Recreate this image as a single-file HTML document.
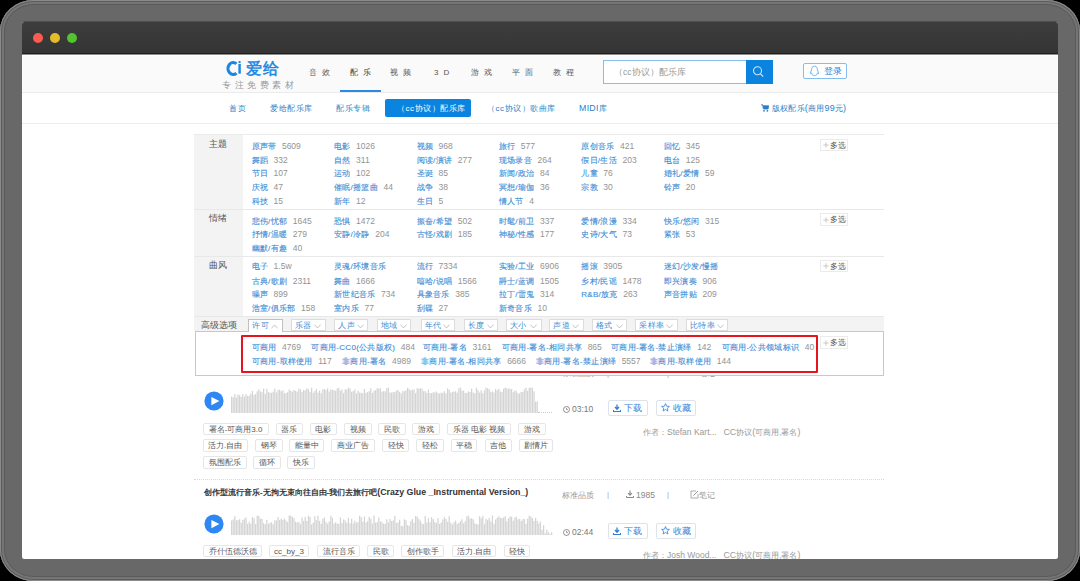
<!DOCTYPE html>
<html><head><meta charset="utf-8">
<style>
*{margin:0;padding:0;box-sizing:border-box}
html,body{width:1080px;height:581px;overflow:hidden;background:#000}
body{font-family:"Liberation Sans",sans-serif;position:relative}
.a{position:absolute;white-space:nowrap}
#bezel{position:absolute;left:0;top:0;width:1080px;height:581px;border-radius:34px / 31px;background:#686868;overflow:hidden;box-shadow:inset 0 0 0 1px #8a8a8a,inset 0 0 0 2px #5c5c5c,inset 0 0 0 4px #757575,inset 0 0 0 5px #5a5a5a}
#win{position:absolute;left:22px;top:22px;width:1036px;height:537px;border-radius:2.5px;overflow:hidden;background:#fff}
#ring{position:absolute;left:22px;top:20.5px;width:1036px;height:20px;border-radius:3px;background:#505050}
#tb{position:absolute;left:0;top:0;width:1036px;height:32.4px;background:linear-gradient(#3d3d3d,#353535 90%);border-bottom:1px solid #1f1f1f}
.dot{position:absolute;top:10.8px;width:10.5px;height:10.5px;border-radius:50%}
#page{position:absolute;left:-22px;top:-22px;width:1080px;height:581px}
#hdr{position:absolute;left:22px;top:55px;width:1036px;height:38px;background:#fafafa;border-top:1px solid #fff;border-bottom:1px solid #ebebeb}
#nav{position:absolute;left:22px;top:93px;width:1036px;height:31px;background:#fff;border-bottom:1px solid #eee}
.hn{font-size:8px;color:#555;letter-spacing:4.6px;line-height:11px}
.nv{font-size:8px;color:#2a7fc6;line-height:11px;letter-spacing:0.5px}
.lk{font-size:8px;color:#3d8dd6;line-height:11px;letter-spacing:0.3px;-webkit-text-stroke:0.12px #3d8dd6}
.nm{-webkit-text-stroke:0}
.nm{color:#939393;margin-left:5.5px;font-size:8.5px;letter-spacing:0}
.lb{font-size:8.5px;color:#555;line-height:11px}
.dd{position:absolute;top:319px;height:12px;border:1px solid #dcdcdc;background:#fff;font-size:8px;color:#3a8ad2;line-height:12px;padding-left:3px;letter-spacing:0.3px}
.dd svg{position:absolute;right:3.5px;top:3.5px}
.more{position:absolute;width:28px;height:12.5px;border:1px solid #ebebeb;background:#fff;font-size:8.3px;color:#555;line-height:11px}
.tag{position:absolute;height:12.5px;border:1px solid #e6e6e6;border-radius:2px;background:#fff;font-size:8px;color:#555;line-height:11.8px;text-align:center}
.btn{position:absolute;height:16.2px;border:1px solid #dde3ea;border-radius:2px;background:#fff;font-size:8.5px;color:#2f7fd8;line-height:13.6px}
.gray{font-size:8px;color:#999;line-height:11px}
</style></head><body>
<div id="bezel">
 <div id="ring"></div>
 <div id="win">
  <div id="tb">
   <div class="dot" style="left:10.8px;background:#fc5b52"></div>
   <div class="dot" style="left:27.8px;background:#e6bb2a"></div>
   <div class="dot" style="left:44.8px;background:#52c42f"></div>
  </div>
  <div id="page">
   <div id="hdr"></div>
   <div class="a" style="left:22px;top:54px;width:1036px;height:1px;background:#8a8a8a"></div>
   <svg class="a" style="left:225px;top:60px" width="18" height="17" viewBox="0 0 18 17"><path d="M11.4 3.9 A5.1 6 0 1 0 11.4 13.1" fill="none" stroke="#1a87e0" stroke-width="3.2"/><rect x="13.4" y="1" width="2.4" height="2.1" rx="1" fill="#1a87e0"/><rect x="13.4" y="3.9" width="2.4" height="9.8" fill="#1a87e0"/></svg>
   <div class="a" style="left:245.5px;top:59px;font-size:16px;color:#1a87e0;line-height:19px;-webkit-text-stroke:0.5px #1a87e0;letter-spacing:1px">爱给</div>
   <div class="a" style="left:222px;top:80px;font-size:9px;color:#9a9a9a;line-height:11px;letter-spacing:3.5px">专注免费素材</div>
   <div class="a hn" style="left:309px;top:67px">音效</div>
   <div class="a hn" style="left:350px;top:67px;color:#333">配乐</div>
   <div class="a hn" style="left:390px;top:67px">视频</div>
   <div class="a hn" style="left:434px;top:67px;letter-spacing:5px">3D</div>
   <div class="a hn" style="left:471px;top:67px">游戏</div>
   <div class="a hn" style="left:512px;top:67px">平面</div>
   <div class="a hn" style="left:553px;top:67px">教程</div>
   <div class="a" style="left:340px;top:90px;width:41px;height:2px;background:#2a8ae2"></div>
   <div class="a" style="left:603px;top:60px;width:144px;height:24px;border:1px solid #86bdec;background:#fff"></div>
   <div class="a" style="left:614px;top:66px;font-size:8.5px;color:#999;line-height:12px">（cc协议）配乐库</div>
   <div class="a" style="left:746px;top:60px;width:27px;height:24px;background:#0a84df"></div>
   <svg class="a" style="left:752.3px;top:66.3px" width="13" height="12" viewBox="0 0 13 12"><circle cx="5.5" cy="4.8" r="4" fill="none" stroke="#cfe6fa" stroke-width="1.05"/><path d="M8.3 7.7 L11.2 10.6" stroke="#cfe6fa" stroke-width="1.2"/></svg>
   <div class="a" style="left:803px;top:63px;width:44px;height:16px;border:1px solid #85bdec;border-radius:2px;background:#fff"></div>
   <svg class="a" style="left:809px;top:65px" width="11" height="12" viewBox="0 0 11 12"><path d="M5.5 1.2 C3.3 1.2 2.6 3 2.6 4.6 C2.6 5.5 1.6 6.6 1.5 8 C1.5 9 2.2 8.6 2.6 8.2 C2.8 9.4 3.6 10.6 5.5 10.6 C7.4 10.6 8.2 9.4 8.4 8.2 C8.8 8.6 9.5 9 9.5 8 C9.4 6.6 8.4 5.5 8.4 4.6 C8.4 3 7.7 1.2 5.5 1.2 Z" fill="none" stroke="#5aaae8" stroke-width="0.9"/></svg>
   <div class="a" style="left:824px;top:65px;font-size:9px;color:#2a82d2;line-height:12px">登录</div>
   <div id="nav"></div>
   <div class="a nv" style="left:229px;top:103px">首页</div>
   <div class="a nv" style="left:270px;top:103px">爱给配乐库</div>
   <div class="a nv" style="left:336px;top:103px">配乐专辑</div>
   <div class="a" style="left:385px;top:99px;width:86px;height:18px;background:#0a84df;border-radius:2px"></div>
   <div class="a nv" style="left:397px;top:103px;color:#fff">（cc协议）配乐库</div>
   <div class="a nv" style="left:487px;top:103px">（cc协议）歌曲库</div>
   <div class="a nv" style="left:579px;top:103px"><span style="font-size:8.8px;letter-spacing:0.3px">MIDI</span>库</div>
   <svg class="a" style="left:761px;top:104px" width="8" height="8" viewBox="0 0 8 8"><path d="M0 0.8 H1.6 L2.4 5 H7 L7.8 1.8 H2" fill="#2a7fc6" stroke="#2a7fc6" stroke-width="0.8"/><circle cx="3" cy="6.8" r="0.9" fill="#2a7fc6"/><circle cx="6.4" cy="6.8" r="0.9" fill="#2a7fc6"/></svg>
   <div class="a nv" style="left:772px;top:102.8px;font-size:8.4px;letter-spacing:0.2px">版权配乐<span style="font-size:9px">(</span>商用<span style="font-size:9px">99</span>元<span style="font-size:9px">)</span></div>
   <div class="a" style="left:194px;top:134px;width:690px;height:1px;background:#ebebeb"></div>
   <div class="a" style="left:194px;top:135px;width:48.5px;height:181px;background:#f3f3f3"></div>
   <div class="a" style="left:194px;top:209px;width:690px;height:1px;background:#e8e8e8"></div>
   <div class="a" style="left:194px;top:256px;width:690px;height:1px;background:#e8e8e8"></div>
   <div class="a" style="left:194px;top:316px;width:690px;height:1px;background:#e8e8e8"></div>
   <div class="a" style="left:194px;top:317px;width:690px;height:14px;background:#f3f3f3"></div>
   <div class="a lb" style="left:209px;top:139px">主题</div>
   <div class="a lk" style="left:251.5px;top:140.85px">原声带<span class="nm">5609</span></div>
   <div class="a lk" style="left:334.0px;top:140.85px">电影<span class="nm">1026</span></div>
   <div class="a lk" style="left:416.5px;top:140.85px">视频<span class="nm">968</span></div>
   <div class="a lk" style="left:498.75px;top:140.85px">旅行<span class="nm">577</span></div>
   <div class="a lk" style="left:581.25px;top:140.85px">原创音乐<span class="nm">421</span></div>
   <div class="a lk" style="left:663.75px;top:140.85px">回忆<span class="nm">345</span></div>
   <div class="a lk" style="left:251.5px;top:154.6px">舞蹈<span class="nm">332</span></div>
   <div class="a lk" style="left:334.0px;top:154.6px">自然<span class="nm">311</span></div>
   <div class="a lk" style="left:416.5px;top:154.6px">阅读/演讲<span class="nm">277</span></div>
   <div class="a lk" style="left:498.75px;top:154.6px">现场录音<span class="nm">264</span></div>
   <div class="a lk" style="left:581.25px;top:154.6px">假日/生活<span class="nm">203</span></div>
   <div class="a lk" style="left:663.75px;top:154.6px">电台<span class="nm">125</span></div>
   <div class="a lk" style="left:251.5px;top:168.35px">节日<span class="nm">107</span></div>
   <div class="a lk" style="left:334.0px;top:168.35px">运动<span class="nm">102</span></div>
   <div class="a lk" style="left:416.5px;top:168.35px">圣诞<span class="nm">85</span></div>
   <div class="a lk" style="left:498.75px;top:168.35px">新闻/政治<span class="nm">84</span></div>
   <div class="a lk" style="left:581.25px;top:168.35px">儿童<span class="nm">76</span></div>
   <div class="a lk" style="left:663.75px;top:168.35px">婚礼/爱情<span class="nm">59</span></div>
   <div class="a lk" style="left:251.5px;top:182.1px">庆祝<span class="nm">47</span></div>
   <div class="a lk" style="left:334.0px;top:182.1px">催眠/摇篮曲<span class="nm">44</span></div>
   <div class="a lk" style="left:416.5px;top:182.1px">战争<span class="nm">38</span></div>
   <div class="a lk" style="left:498.75px;top:182.1px">冥想/瑜伽<span class="nm">36</span></div>
   <div class="a lk" style="left:581.25px;top:182.1px">宗教<span class="nm">30</span></div>
   <div class="a lk" style="left:663.75px;top:182.1px">铃声<span class="nm">20</span></div>
   <div class="a lk" style="left:251.5px;top:195.85px">科技<span class="nm">15</span></div>
   <div class="a lk" style="left:334.0px;top:195.85px">新年<span class="nm">12</span></div>
   <div class="a lk" style="left:416.5px;top:195.85px">生日<span class="nm">5</span></div>
   <div class="a lk" style="left:498.75px;top:195.85px">情人节<span class="nm">4</span></div>
   <div class="more" style="left:819.8px;top:138.5px"><svg style="position:absolute;left:2px;top:2.5px" width="6" height="6" viewBox="0 0 6 6"><path d="M3 0.3 V5.7 M0.3 3 H5.7" stroke="#b5b5b5" stroke-width="0.7"/></svg><span style="position:absolute;left:9.5px;top:0">多选</span></div>
   <div class="a lb" style="left:209px;top:213px">情绪</div>
   <div class="a lk" style="left:251.5px;top:215.6px">悲伤/忧郁<span class="nm">1645</span></div>
   <div class="a lk" style="left:334.0px;top:215.6px">恐惧<span class="nm">1472</span></div>
   <div class="a lk" style="left:416.5px;top:215.6px">振奋/希望<span class="nm">502</span></div>
   <div class="a lk" style="left:498.75px;top:215.6px">时髦/前卫<span class="nm">337</span></div>
   <div class="a lk" style="left:581.25px;top:215.6px">爱情/浪漫<span class="nm">334</span></div>
   <div class="a lk" style="left:663.75px;top:215.6px">快乐/悠闲<span class="nm">315</span></div>
   <div class="a lk" style="left:251.5px;top:229.1px">抒情/温暖<span class="nm">279</span></div>
   <div class="a lk" style="left:334.0px;top:229.1px">安静/冷静<span class="nm">204</span></div>
   <div class="a lk" style="left:416.5px;top:229.1px">古怪/戏剧<span class="nm">185</span></div>
   <div class="a lk" style="left:498.75px;top:229.1px">神秘/性感<span class="nm">177</span></div>
   <div class="a lk" style="left:581.25px;top:229.1px">史诗/大气<span class="nm">73</span></div>
   <div class="a lk" style="left:663.75px;top:229.1px">紧张<span class="nm">53</span></div>
   <div class="a lk" style="left:251.5px;top:243.1px">幽默/有趣<span class="nm">40</span></div>
   <div class="more" style="left:819.8px;top:213px"><svg style="position:absolute;left:2px;top:2.5px" width="6" height="6" viewBox="0 0 6 6"><path d="M3 0.3 V5.7 M0.3 3 H5.7" stroke="#b5b5b5" stroke-width="0.7"/></svg><span style="position:absolute;left:9.5px;top:0">多选</span></div>
   <div class="a lb" style="left:209px;top:259.5px">曲风</div>
   <div class="a lk" style="left:251.5px;top:261.35px">电子<span class="nm">1.5w</span></div>
   <div class="a lk" style="left:334.0px;top:261.35px">灵魂/环境音乐</div>
   <div class="a lk" style="left:416.5px;top:261.35px">流行<span class="nm">7334</span></div>
   <div class="a lk" style="left:498.75px;top:261.35px">实验/工业<span class="nm">6906</span></div>
   <div class="a lk" style="left:581.25px;top:261.35px">摇滚<span class="nm">3905</span></div>
   <div class="a lk" style="left:663.75px;top:261.35px">迷幻/沙发/慢摇</div>
   <div class="a lk" style="left:251.5px;top:275.6px">古典/歌剧<span class="nm">2311</span></div>
   <div class="a lk" style="left:334.0px;top:275.6px">舞曲<span class="nm">1666</span></div>
   <div class="a lk" style="left:416.5px;top:275.6px">嘻哈/说唱<span class="nm">1566</span></div>
   <div class="a lk" style="left:498.75px;top:275.6px">爵士/蓝调<span class="nm">1505</span></div>
   <div class="a lk" style="left:581.25px;top:275.6px">乡村/民谣<span class="nm">1478</span></div>
   <div class="a lk" style="left:663.75px;top:275.6px">即兴演奏<span class="nm">906</span></div>
   <div class="a lk" style="left:251.5px;top:289.35px">噪声<span class="nm">899</span></div>
   <div class="a lk" style="left:334.0px;top:289.35px">新世纪音乐<span class="nm">734</span></div>
   <div class="a lk" style="left:416.5px;top:289.35px">具象音乐<span class="nm">385</span></div>
   <div class="a lk" style="left:498.75px;top:289.35px">拉丁/雷鬼<span class="nm">314</span></div>
   <div class="a lk" style="left:581.25px;top:289.35px">R&amp;B/放克<span class="nm">263</span></div>
   <div class="a lk" style="left:663.75px;top:289.35px">声音拼贴<span class="nm">209</span></div>
   <div class="a lk" style="left:251.5px;top:303.1px">浩室/俱乐部<span class="nm">158</span></div>
   <div class="a lk" style="left:334.0px;top:303.1px">室内乐<span class="nm">77</span></div>
   <div class="a lk" style="left:416.5px;top:303.1px">刮碟<span class="nm">27</span></div>
   <div class="a lk" style="left:498.75px;top:303.1px">新奇音乐<span class="nm">10</span></div>
   <div class="more" style="left:819.8px;top:259.5px"><svg style="position:absolute;left:2px;top:2.5px" width="6" height="6" viewBox="0 0 6 6"><path d="M3 0.3 V5.7 M0.3 3 H5.7" stroke="#b5b5b5" stroke-width="0.7"/></svg><span style="position:absolute;left:9.5px;top:0">多选</span></div>
   <div class="a gray" style="left:562px;top:367.5px">标准品质</div>
   <div class="a gray" style="left:607px;top:367.5px;color:#aaa">|</div>
   <div class="a gray" style="left:626px;top:367.5px">⬇ 1376</div>
   <div class="a gray" style="left:667px;top:367.5px;color:#aaa">|</div>
   <div class="a gray" style="left:690px;top:367.5px">✎ 笔记</div>
   <div class="a lb" style="left:200.5px;top:320px">高级选项</div>
   <div class="dd" style="left:291px;width:34.5px">乐器<svg width="7" height="5" viewBox="0 0 7 5"><path d="M0.4 0.6 L3.5 4 L6.6 0.6" fill="none" stroke="#aaa" stroke-width="0.7"/></svg></div>
   <div class="dd" style="left:334.4px;width:33.9px">人声<svg width="7" height="5" viewBox="0 0 7 5"><path d="M0.4 0.6 L3.5 4 L6.6 0.6" fill="none" stroke="#aaa" stroke-width="0.7"/></svg></div>
   <div class="dd" style="left:377.2px;width:34.2px">地域<svg width="7" height="5" viewBox="0 0 7 5"><path d="M0.4 0.6 L3.5 4 L6.6 0.6" fill="none" stroke="#aaa" stroke-width="0.7"/></svg></div>
   <div class="dd" style="left:420.5px;width:34.2px">年代<svg width="7" height="5" viewBox="0 0 7 5"><path d="M0.4 0.6 L3.5 4 L6.6 0.6" fill="none" stroke="#aaa" stroke-width="0.7"/></svg></div>
   <div class="dd" style="left:463.5px;width:34.6px">长度<svg width="7" height="5" viewBox="0 0 7 5"><path d="M0.4 0.6 L3.5 4 L6.6 0.6" fill="none" stroke="#aaa" stroke-width="0.7"/></svg></div>
   <div class="dd" style="left:506.1px;width:35.6px">大小<svg width="7" height="5" viewBox="0 0 7 5"><path d="M0.4 0.6 L3.5 4 L6.6 0.6" fill="none" stroke="#aaa" stroke-width="0.7"/></svg></div>
   <div class="dd" style="left:549.4px;width:34.3px">声道<svg width="7" height="5" viewBox="0 0 7 5"><path d="M0.4 0.6 L3.5 4 L6.6 0.6" fill="none" stroke="#aaa" stroke-width="0.7"/></svg></div>
   <div class="dd" style="left:592.2px;width:35.0px">格式<svg width="7" height="5" viewBox="0 0 7 5"><path d="M0.4 0.6 L3.5 4 L6.6 0.6" fill="none" stroke="#aaa" stroke-width="0.7"/></svg></div>
   <div class="dd" style="left:635.3px;width:42.5px">采样率<svg width="7" height="5" viewBox="0 0 7 5"><path d="M0.4 0.6 L3.5 4 L6.6 0.6" fill="none" stroke="#aaa" stroke-width="0.7"/></svg></div>
   <div class="dd" style="left:686.1px;width:42.2px">比特率<svg width="7" height="5" viewBox="0 0 7 5"><path d="M0.4 0.6 L3.5 4 L6.6 0.6" fill="none" stroke="#aaa" stroke-width="0.7"/></svg></div>
   <div class="a" style="left:194.5px;top:331px;width:689.5px;height:44.5px;border:1px solid #c8c8c8;background:#fff"></div>
   <div class="dd" style="left:248.3px;width:34.5px;height:13px;border-color:#c0c0c0;border-bottom:none">许可<svg width="7" height="5" viewBox="0 0 7 5"><path d="M0.4 4.4 L3.5 1 L6.6 4.4" fill="none" stroke="#aaa" stroke-width="0.7"/></svg></div>
   <div class="more" style="left:819.8px;top:336px"><svg style="position:absolute;left:2px;top:2.5px" width="6" height="6" viewBox="0 0 6 6"><path d="M3 0.3 V5.7 M0.3 3 H5.7" stroke="#b5b5b5" stroke-width="0.7"/></svg><span style="position:absolute;left:9.5px;top:0">多选</span></div>
   <div class="a" style="left:241px;top:334.5px;width:577px;height:38px;border:2.5px solid #e8141c;border-radius:1px"></div>
   <div class="a lk" style="left:251.7px;top:341.5px">可商用<span class="nm">4769</span></div>
   <div class="a lk" style="left:311.4px;top:341.5px">可商用-CC0(公共版权)<span class="nm">484</span></div>
   <div class="a lk" style="left:422.5px;top:341.5px">可商用-署名<span class="nm">3161</span></div>
   <div class="a lk" style="left:501.5px;top:341.5px">可商用-署名-相同共享<span class="nm">865</span></div>
   <div class="a lk" style="left:611px;top:341.5px">可商用-署名-禁止演绎<span class="nm">142</span></div>
   <div class="a lk" style="left:721.6px;top:341.5px">可商用-公共领域标识<span class="nm">40</span></div>
   <div class="a lk" style="left:251.7px;top:355.7px">可商用-取样使用<span class="nm">117</span></div>
   <div class="a lk" style="left:342px;top:355.7px">非商用-署名<span class="nm">4989</span></div>
   <div class="a lk" style="left:421px;top:355.7px">非商用-署名-相同共享<span class="nm">6666</span></div>
   <div class="a lk" style="left:535.5px;top:355.7px">非商用-署名-禁止演绎<span class="nm">5557</span></div>
   <div class="a lk" style="left:650.2px;top:355.7px">非商用-取样使用<span class="nm">144</span></div>
   <svg class="a" style="left:204px;top:390.8px" width="20" height="20" viewBox="0 0 20 20"><circle cx="10" cy="10" r="9.6" fill="#2f87f3"/><path d="M7.4 5.9 L15.4 10 L7.4 14.2 Z" fill="#fff"/></svg>
   <svg class="a" style="left:231px;top:382.7px" width="327" height="30" fill="#d4d4d4"><rect x="0.00" y="13.56" width="1.25" height="16.44"/><rect x="1.60" y="14.39" width="1.25" height="15.61"/><rect x="3.20" y="11.18" width="1.25" height="18.82"/><rect x="4.80" y="14.45" width="1.25" height="15.55"/><rect x="6.40" y="11.46" width="1.25" height="18.54"/><rect x="8.00" y="12.28" width="1.25" height="17.72"/><rect x="9.60" y="13.92" width="1.25" height="16.08"/><rect x="11.20" y="11.02" width="1.25" height="18.98"/><rect x="12.80" y="13.63" width="1.25" height="16.37"/><rect x="14.40" y="11.05" width="1.25" height="18.95"/><rect x="16.00" y="13.03" width="1.25" height="16.97"/><rect x="17.60" y="12.70" width="1.25" height="17.30"/><rect x="19.20" y="10.49" width="1.25" height="19.51"/><rect x="20.80" y="7.87" width="1.25" height="22.13"/><rect x="22.40" y="11.89" width="1.25" height="18.11"/><rect x="24.00" y="11.08" width="1.25" height="18.92"/><rect x="25.60" y="8.45" width="1.25" height="21.55"/><rect x="27.20" y="6.33" width="1.25" height="23.67"/><rect x="28.80" y="8.35" width="1.25" height="21.65"/><rect x="30.40" y="9.22" width="1.25" height="20.78"/><rect x="32.00" y="5.54" width="1.25" height="24.46"/><rect x="33.60" y="10.91" width="1.25" height="19.09"/><rect x="35.20" y="5.84" width="1.25" height="24.16"/><rect x="36.80" y="9.04" width="1.25" height="20.96"/><rect x="38.40" y="9.71" width="1.25" height="20.29"/><rect x="40.00" y="9.79" width="1.25" height="20.21"/><rect x="41.60" y="8.65" width="1.25" height="21.35"/><rect x="43.20" y="5.60" width="1.25" height="24.40"/><rect x="44.80" y="9.42" width="1.25" height="20.58"/><rect x="46.40" y="7.01" width="1.25" height="22.99"/><rect x="48.00" y="6.67" width="1.25" height="23.33"/><rect x="49.60" y="8.27" width="1.25" height="21.73"/><rect x="51.20" y="7.21" width="1.25" height="22.79"/><rect x="52.80" y="10.12" width="1.25" height="19.88"/><rect x="54.40" y="10.14" width="1.25" height="19.86"/><rect x="56.00" y="9.26" width="1.25" height="20.74"/><rect x="57.60" y="6.42" width="1.25" height="23.58"/><rect x="59.20" y="7.93" width="1.25" height="22.07"/><rect x="60.80" y="8.62" width="1.25" height="21.38"/><rect x="62.40" y="6.99" width="1.25" height="23.01"/><rect x="64.00" y="7.78" width="1.25" height="22.22"/><rect x="65.60" y="8.70" width="1.25" height="21.30"/><rect x="67.20" y="5.73" width="1.25" height="24.27"/><rect x="68.80" y="6.31" width="1.25" height="23.69"/><rect x="70.40" y="9.04" width="1.25" height="20.96"/><rect x="72.00" y="7.05" width="1.25" height="22.95"/><rect x="73.60" y="7.35" width="1.25" height="22.65"/><rect x="75.20" y="5.25" width="1.25" height="24.75"/><rect x="76.80" y="6.12" width="1.25" height="23.88"/><rect x="78.40" y="8.77" width="1.25" height="21.23"/><rect x="80.00" y="4.62" width="1.25" height="25.38"/><rect x="81.60" y="9.79" width="1.25" height="20.21"/><rect x="83.20" y="7.99" width="1.25" height="22.01"/><rect x="84.80" y="5.96" width="1.25" height="24.04"/><rect x="86.40" y="9.59" width="1.25" height="20.41"/><rect x="88.00" y="7.57" width="1.25" height="22.43"/><rect x="89.60" y="10.26" width="1.25" height="19.74"/><rect x="91.20" y="6.49" width="1.25" height="23.51"/><rect x="92.80" y="5.91" width="1.25" height="24.09"/><rect x="94.40" y="7.06" width="1.25" height="22.94"/><rect x="96.00" y="5.25" width="1.25" height="24.75"/><rect x="97.60" y="8.62" width="1.25" height="21.38"/><rect x="99.20" y="6.33" width="1.25" height="23.67"/><rect x="100.80" y="6.93" width="1.25" height="23.07"/><rect x="102.40" y="7.02" width="1.25" height="22.98"/><rect x="104.00" y="7.76" width="1.25" height="22.24"/><rect x="105.60" y="5.46" width="1.25" height="24.54"/><rect x="107.20" y="4.83" width="1.25" height="25.17"/><rect x="108.80" y="7.66" width="1.25" height="22.34"/><rect x="110.40" y="6.52" width="1.25" height="23.48"/><rect x="112.00" y="10.14" width="1.25" height="19.86"/><rect x="113.60" y="6.29" width="1.25" height="23.71"/><rect x="115.20" y="6.62" width="1.25" height="23.38"/><rect x="116.80" y="4.54" width="1.25" height="25.46"/><rect x="118.40" y="5.57" width="1.25" height="24.43"/><rect x="120.00" y="8.79" width="1.25" height="21.21"/><rect x="121.60" y="8.19" width="1.25" height="21.81"/><rect x="123.20" y="6.49" width="1.25" height="23.51"/><rect x="124.80" y="10.36" width="1.25" height="19.64"/><rect x="126.40" y="7.73" width="1.25" height="22.27"/><rect x="128.00" y="9.49" width="1.25" height="20.51"/><rect x="129.60" y="9.80" width="1.25" height="20.20"/><rect x="131.20" y="10.15" width="1.25" height="19.85"/><rect x="132.80" y="5.89" width="1.25" height="24.11"/><rect x="134.40" y="9.72" width="1.25" height="20.28"/><rect x="136.00" y="9.01" width="1.25" height="20.99"/><rect x="137.60" y="8.15" width="1.25" height="21.85"/><rect x="139.20" y="5.27" width="1.25" height="24.73"/><rect x="140.80" y="10.02" width="1.25" height="19.98"/><rect x="142.40" y="7.80" width="1.25" height="22.20"/><rect x="144.00" y="7.20" width="1.25" height="22.80"/><rect x="145.60" y="5.20" width="1.25" height="24.80"/><rect x="147.20" y="5.58" width="1.25" height="24.42"/><rect x="148.80" y="5.32" width="1.25" height="24.68"/><rect x="150.40" y="8.83" width="1.25" height="21.17"/><rect x="152.00" y="8.01" width="1.25" height="21.99"/><rect x="153.60" y="8.35" width="1.25" height="21.65"/><rect x="155.20" y="5.19" width="1.25" height="24.81"/><rect x="156.80" y="4.75" width="1.25" height="25.25"/><rect x="158.40" y="9.59" width="1.25" height="20.41"/><rect x="160.00" y="9.44" width="1.25" height="20.56"/><rect x="161.60" y="9.11" width="1.25" height="20.89"/><rect x="163.20" y="9.10" width="1.25" height="20.90"/><rect x="164.80" y="7.59" width="1.25" height="22.41"/><rect x="166.40" y="6.97" width="1.25" height="23.03"/><rect x="168.00" y="8.92" width="1.25" height="21.08"/><rect x="169.60" y="10.48" width="1.25" height="19.52"/><rect x="171.20" y="7.99" width="1.25" height="22.01"/><rect x="172.80" y="8.28" width="1.25" height="21.72"/><rect x="174.40" y="7.10" width="1.25" height="22.90"/><rect x="176.00" y="4.78" width="1.25" height="25.22"/><rect x="177.60" y="6.36" width="1.25" height="23.64"/><rect x="179.20" y="7.41" width="1.25" height="22.59"/><rect x="180.80" y="6.79" width="1.25" height="23.21"/><rect x="182.40" y="6.44" width="1.25" height="23.56"/><rect x="184.00" y="10.18" width="1.25" height="19.82"/><rect x="185.60" y="5.10" width="1.25" height="24.90"/><rect x="187.20" y="5.82" width="1.25" height="24.18"/><rect x="188.80" y="5.25" width="1.25" height="24.75"/><rect x="190.40" y="5.71" width="1.25" height="24.29"/><rect x="192.00" y="8.15" width="1.25" height="21.85"/><rect x="193.60" y="8.11" width="1.25" height="21.89"/><rect x="195.20" y="9.88" width="1.25" height="20.12"/><rect x="196.80" y="6.69" width="1.25" height="23.31"/><rect x="198.40" y="10.13" width="1.25" height="19.87"/><rect x="200.00" y="10.10" width="1.25" height="19.90"/><rect x="201.60" y="9.25" width="1.25" height="20.75"/><rect x="203.20" y="9.53" width="1.25" height="20.47"/><rect x="204.80" y="8.46" width="1.25" height="21.54"/><rect x="206.40" y="10.18" width="1.25" height="19.82"/><rect x="208.00" y="10.50" width="1.25" height="19.50"/><rect x="209.60" y="9.59" width="1.25" height="20.41"/><rect x="211.20" y="9.89" width="1.25" height="20.11"/><rect x="212.80" y="8.32" width="1.25" height="21.68"/><rect x="214.40" y="10.35" width="1.25" height="19.65"/><rect x="216.00" y="5.25" width="1.25" height="24.75"/><rect x="217.60" y="6.82" width="1.25" height="23.18"/><rect x="219.20" y="9.61" width="1.25" height="20.39"/><rect x="220.80" y="8.99" width="1.25" height="21.01"/><rect x="222.40" y="8.42" width="1.25" height="21.58"/><rect x="224.00" y="8.32" width="1.25" height="21.68"/><rect x="225.60" y="9.76" width="1.25" height="20.24"/><rect x="227.20" y="5.41" width="1.25" height="24.59"/><rect x="228.80" y="4.54" width="1.25" height="25.46"/><rect x="230.40" y="7.70" width="1.25" height="22.30"/><rect x="232.00" y="7.60" width="1.25" height="22.40"/><rect x="233.60" y="9.98" width="1.25" height="20.02"/><rect x="235.20" y="9.89" width="1.25" height="20.11"/><rect x="236.80" y="8.44" width="1.25" height="21.56"/><rect x="238.40" y="8.91" width="1.25" height="21.09"/><rect x="240.00" y="5.53" width="1.25" height="24.47"/><rect x="241.60" y="9.53" width="1.25" height="20.47"/><rect x="243.20" y="10.36" width="1.25" height="19.64"/><rect x="244.80" y="4.79" width="1.25" height="25.21"/><rect x="246.40" y="7.33" width="1.25" height="22.67"/><rect x="248.00" y="9.62" width="1.25" height="20.38"/><rect x="249.60" y="7.24" width="1.25" height="22.76"/><rect x="251.20" y="10.34" width="1.25" height="19.66"/><rect x="252.80" y="7.33" width="1.25" height="22.67"/><rect x="254.40" y="4.63" width="1.25" height="25.37"/><rect x="256.00" y="5.32" width="1.25" height="24.68"/><rect x="257.60" y="6.32" width="1.25" height="23.68"/><rect x="259.20" y="8.93" width="1.25" height="21.07"/><rect x="260.80" y="8.30" width="1.25" height="21.70"/><rect x="262.40" y="9.50" width="1.25" height="20.50"/><rect x="264.00" y="5.87" width="1.25" height="24.13"/><rect x="265.60" y="7.30" width="1.25" height="22.70"/><rect x="267.20" y="5.83" width="1.25" height="24.17"/><rect x="268.80" y="8.52" width="1.25" height="21.48"/><rect x="270.40" y="9.16" width="1.25" height="20.84"/><rect x="272.00" y="5.63" width="1.25" height="24.37"/><rect x="273.60" y="4.59" width="1.25" height="25.41"/><rect x="275.20" y="5.38" width="1.25" height="24.62"/><rect x="276.80" y="5.66" width="1.25" height="24.34"/><rect x="278.40" y="5.59" width="1.25" height="24.41"/><rect x="280.00" y="6.06" width="1.25" height="23.94"/><rect x="281.60" y="9.14" width="1.25" height="20.86"/><rect x="283.20" y="7.39" width="1.25" height="22.61"/><rect x="284.80" y="8.37" width="1.25" height="21.63"/><rect x="286.40" y="10.33" width="1.25" height="19.67"/><rect x="288.00" y="10.33" width="1.25" height="19.67"/><rect x="289.60" y="8.82" width="1.25" height="21.18"/><rect x="291.20" y="8.94" width="1.25" height="21.06"/><rect x="292.80" y="6.34" width="1.25" height="23.66"/><rect x="294.40" y="4.76" width="1.25" height="25.24"/><rect x="296.00" y="7.82" width="1.25" height="22.18"/><rect x="297.60" y="4.88" width="1.25" height="25.12"/><rect x="299.20" y="4.57" width="1.25" height="25.43"/><rect x="300.80" y="4.77" width="1.25" height="25.23"/><rect x="302.40" y="8.31" width="1.25" height="21.69"/><rect x="304.00" y="18.68" width="1.25" height="11.32"/><rect x="305.60" y="18.64" width="1.25" height="11.36"/></svg>
   <div class="a" style="left:538px;top:412px;width:14px;height:0;border-top:1px dotted #ccc"></div>
   <svg class="a" style="left:563px;top:405.9px" width="7" height="7" viewBox="0 0 7 7"><circle cx="3.5" cy="3.5" r="3" fill="none" stroke="#777" stroke-width="0.8"/><path d="M3.5 1.8 V3.6 H5" fill="none" stroke="#777" stroke-width="0.7"/></svg>
   <div class="a gray" style="left:572px;top:403.9px;color:#777;font-size:8.5px">03:10</div>
   <div class="btn" style="left:608.3px;top:399.6px;width:40px"></div>
   <svg class="a" style="left:613px;top:403.6px" width="8" height="8" viewBox="0 0 8 8"><path d="M4 0.5 V5 M2 3 L4 5.2 L6 3" fill="none" stroke="#2f7fd8" stroke-width="1.3"/><path d="M0.5 6 V7.5 H7.5 V6" fill="none" stroke="#2f7fd8" stroke-width="1.1"/></svg>
   <div class="a" style="left:624px;top:402.6px;font-size:8.5px;color:#2f7fd8;line-height:11px">下载</div>
   <div class="btn" style="left:656.4px;top:399.6px;width:39.5px"></div>
   <svg class="a" style="left:660.5px;top:403.1px" width="9" height="9" viewBox="0 0 9 9"><path d="M4.5 0.6 L5.6 3.2 L8.4 3.4 L6.3 5.2 L6.9 8 L4.5 6.5 L2.1 8 L2.7 5.2 L0.6 3.4 L3.4 3.2 Z" fill="none" stroke="#2f7fd8" stroke-width="0.8"/></svg>
   <div class="a" style="left:673px;top:402.6px;font-size:8.5px;color:#2f7fd8;line-height:11px">收藏</div>
   <div class="tag" style="left:202.5px;top:422.5px;width:66.2px">署名-可商用3.0</div>
   <div class="tag" style="left:275.5px;top:422.5px;width:27.6px">器乐</div>
   <div class="tag" style="left:309.6px;top:422.5px;width:27.7px">电影</div>
   <div class="tag" style="left:344px;top:422.5px;width:27.7px">视频</div>
   <div class="tag" style="left:378.2px;top:422.5px;width:27.8px">民歌</div>
   <div class="tag" style="left:412.2px;top:422.5px;width:28.2px">游戏</div>
   <div class="tag" style="left:446.6px;top:422.5px;width:64.8px">乐器 电影 视频</div>
   <div class="tag" style="left:518px;top:422.5px;width:27.5px">游戏</div>
   <div class="tag" style="left:202.5px;top:439.3px;width:45.3px">活力.自由</div>
   <div class="tag" style="left:254.5px;top:439.3px;width:28.2px">钢琴</div>
   <div class="tag" style="left:289.2px;top:439.3px;width:35.1px">能量中</div>
   <div class="tag" style="left:331.3px;top:439.3px;width:43.6px">商业广告</div>
   <div class="tag" style="left:381.9px;top:439.3px;width:27.6px">轻快</div>
   <div class="tag" style="left:416.3px;top:439.3px;width:27.7px">轻松</div>
   <div class="tag" style="left:450.7px;top:439.3px;width:26.8px">平稳</div>
   <div class="tag" style="left:484.5px;top:439.3px;width:27.4px">吉他</div>
   <div class="tag" style="left:518.6px;top:439.3px;width:34.9px">剧情片</div>
   <div class="tag" style="left:202.5px;top:456.2px;width:44.1px">氛围配乐</div>
   <div class="tag" style="left:253px;top:456.2px;width:28.0px">循环</div>
   <div class="tag" style="left:287.3px;top:456.2px;width:27.4px">快乐</div>
   <div class="a gray" style="left:643px;top:427px">作者：<span style="font-size:8.5px;letter-spacing:0">Stefan Kart...</span></div>
   <div class="a gray" style="left:723.5px;top:427px"><span style="font-size:8.8px">CC</span>协议<span style="font-size:8.8px">(</span>可商用,署名<span style="font-size:8.8px">)</span></div>
   <div class="a" style="left:194px;top:479px;width:690px;height:0;border-top:1px dotted #d8d8d8"></div>
   <div class="a" style="left:204px;top:487px;font-size:7.8px;font-weight:bold;color:#333;line-height:11px">创作型流行音乐-无拘无束向往自由-我们去旅行吧<span style="font-size:8.8px">(Crazy Glue _Instrumental Version_)</span></div>
   <div class="a gray" style="left:562px;top:490px">标准品质</div>
   <div class="a gray" style="left:607px;top:489px;color:#aaa">|</div>
   <svg class="a" style="left:626px;top:490px" width="8" height="8" viewBox="0 0 8 8"><path d="M4 0.5 V5 M2 3 L4 5.2 L6 3" fill="none" stroke="#888" stroke-width="1.1"/><path d="M0.5 6 V7.5 H7.5 V6" fill="none" stroke="#888" stroke-width="1"/></svg>
   <div class="a gray" style="left:636px;top:489.5px;color:#888;font-size:8.5px">1985</div>
   <div class="a gray" style="left:667px;top:489px;color:#aaa">|</div>
   <svg class="a" style="left:690px;top:490px" width="9" height="9" viewBox="0 0 9 9"><path d="M6 1 H1 V8 H8 V4" fill="none" stroke="#999" stroke-width="0.8"/><path d="M3.5 5.5 L8 1" stroke="#999" stroke-width="1"/></svg>
   <div class="a gray" style="left:699px;top:490px">笔记</div>
   <svg class="a" style="left:204px;top:513.6px" width="20" height="20" viewBox="0 0 20 20"><circle cx="10" cy="10" r="9.6" fill="#2f87f3"/><path d="M7.4 5.9 L15.4 10 L7.4 14.2 Z" fill="#fff"/></svg>
   <svg class="a" style="left:231px;top:505.4px" width="341" height="30" fill="#d4d4d4"><rect x="0.00" y="15.43" width="1.25" height="14.57"/><rect x="1.60" y="14.46" width="1.25" height="15.54"/><rect x="3.20" y="11.18" width="1.25" height="18.82"/><rect x="4.80" y="15.31" width="1.25" height="14.69"/><rect x="6.40" y="14.93" width="1.25" height="15.07"/><rect x="8.00" y="14.21" width="1.25" height="15.79"/><rect x="9.60" y="17.84" width="1.25" height="12.16"/><rect x="11.20" y="14.89" width="1.25" height="15.11"/><rect x="12.80" y="13.83" width="1.25" height="16.17"/><rect x="14.40" y="12.36" width="1.25" height="17.64"/><rect x="16.00" y="18.65" width="1.25" height="11.35"/><rect x="17.60" y="16.77" width="1.25" height="13.23"/><rect x="19.20" y="18.68" width="1.25" height="11.32"/><rect x="20.80" y="12.21" width="1.25" height="17.79"/><rect x="22.40" y="13.26" width="1.25" height="16.74"/><rect x="24.00" y="19.12" width="1.25" height="10.88"/><rect x="25.60" y="10.66" width="1.25" height="19.34"/><rect x="27.20" y="10.82" width="1.25" height="19.18"/><rect x="28.80" y="13.61" width="1.25" height="16.39"/><rect x="30.40" y="13.96" width="1.25" height="16.04"/><rect x="32.00" y="18.08" width="1.25" height="11.92"/><rect x="33.60" y="19.36" width="1.25" height="10.64"/><rect x="35.20" y="14.74" width="1.25" height="15.26"/><rect x="36.80" y="18.96" width="1.25" height="11.04"/><rect x="38.40" y="17.79" width="1.25" height="12.21"/><rect x="40.00" y="17.32" width="1.25" height="12.68"/><rect x="41.60" y="19.23" width="1.25" height="10.77"/><rect x="43.20" y="15.32" width="1.25" height="14.68"/><rect x="44.80" y="15.54" width="1.25" height="14.46"/><rect x="46.40" y="11.92" width="1.25" height="18.08"/><rect x="48.00" y="14.83" width="1.25" height="15.17"/><rect x="49.60" y="13.74" width="1.25" height="16.26"/><rect x="51.20" y="15.00" width="1.25" height="15.00"/><rect x="52.80" y="13.54" width="1.25" height="16.46"/><rect x="54.40" y="15.38" width="1.25" height="14.62"/><rect x="56.00" y="17.00" width="1.25" height="13.00"/><rect x="57.60" y="10.52" width="1.25" height="19.48"/><rect x="59.20" y="10.54" width="1.25" height="19.46"/><rect x="60.80" y="11.94" width="1.25" height="18.06"/><rect x="62.40" y="13.13" width="1.25" height="16.87"/><rect x="64.00" y="16.66" width="1.25" height="13.34"/><rect x="65.60" y="17.43" width="1.25" height="12.57"/><rect x="67.20" y="16.90" width="1.25" height="13.10"/><rect x="68.80" y="18.87" width="1.25" height="11.13"/><rect x="70.40" y="12.60" width="1.25" height="17.40"/><rect x="72.00" y="15.90" width="1.25" height="14.10"/><rect x="73.60" y="11.88" width="1.25" height="18.12"/><rect x="75.20" y="16.02" width="1.25" height="13.98"/><rect x="76.80" y="10.88" width="1.25" height="19.12"/><rect x="78.40" y="11.87" width="1.25" height="18.13"/><rect x="80.00" y="19.50" width="1.25" height="10.50"/><rect x="81.60" y="17.61" width="1.25" height="12.39"/><rect x="83.20" y="11.31" width="1.25" height="18.69"/><rect x="84.80" y="15.27" width="1.25" height="14.73"/><rect x="86.40" y="10.68" width="1.25" height="19.32"/><rect x="88.00" y="15.92" width="1.25" height="14.08"/><rect x="89.60" y="18.84" width="1.25" height="11.16"/><rect x="91.20" y="13.83" width="1.25" height="16.17"/><rect x="92.80" y="12.49" width="1.25" height="17.51"/><rect x="94.40" y="17.07" width="1.25" height="12.93"/><rect x="96.00" y="18.72" width="1.25" height="11.28"/><rect x="97.60" y="16.51" width="1.25" height="13.49"/><rect x="99.20" y="10.82" width="1.25" height="19.18"/><rect x="100.80" y="12.68" width="1.25" height="17.32"/><rect x="102.40" y="18.44" width="1.25" height="11.56"/><rect x="104.00" y="17.28" width="1.25" height="12.72"/><rect x="105.60" y="18.59" width="1.25" height="11.41"/><rect x="107.20" y="18.96" width="1.25" height="11.04"/><rect x="108.80" y="12.33" width="1.25" height="17.67"/><rect x="110.40" y="17.90" width="1.25" height="12.10"/><rect x="112.00" y="14.47" width="1.25" height="15.53"/><rect x="113.60" y="15.47" width="1.25" height="14.53"/><rect x="115.20" y="17.78" width="1.25" height="12.22"/><rect x="116.80" y="12.91" width="1.25" height="17.09"/><rect x="118.40" y="18.32" width="1.25" height="11.68"/><rect x="120.00" y="13.71" width="1.25" height="16.29"/><rect x="121.60" y="18.45" width="1.25" height="11.55"/><rect x="123.20" y="15.71" width="1.25" height="14.29"/><rect x="124.80" y="17.58" width="1.25" height="12.42"/><rect x="126.40" y="17.07" width="1.25" height="12.93"/><rect x="128.00" y="10.76" width="1.25" height="19.24"/><rect x="129.60" y="12.27" width="1.25" height="17.73"/><rect x="131.20" y="16.76" width="1.25" height="13.24"/><rect x="132.80" y="11.54" width="1.25" height="18.46"/><rect x="134.40" y="17.60" width="1.25" height="12.40"/><rect x="136.00" y="15.95" width="1.25" height="14.05"/><rect x="137.60" y="11.81" width="1.25" height="18.19"/><rect x="139.20" y="13.72" width="1.25" height="16.28"/><rect x="140.80" y="18.60" width="1.25" height="11.40"/><rect x="142.40" y="10.60" width="1.25" height="19.40"/><rect x="144.00" y="17.58" width="1.25" height="12.42"/><rect x="145.60" y="17.18" width="1.25" height="12.82"/><rect x="147.20" y="12.55" width="1.25" height="17.45"/><rect x="148.80" y="16.54" width="1.25" height="13.46"/><rect x="150.40" y="16.83" width="1.25" height="13.17"/><rect x="152.00" y="18.84" width="1.25" height="11.16"/><rect x="153.60" y="18.69" width="1.25" height="11.31"/><rect x="155.20" y="14.26" width="1.25" height="15.74"/><rect x="156.80" y="17.31" width="1.25" height="12.69"/><rect x="158.40" y="14.09" width="1.25" height="15.91"/><rect x="160.00" y="16.15" width="1.25" height="13.85"/><rect x="161.60" y="15.42" width="1.25" height="14.58"/><rect x="163.20" y="10.87" width="1.25" height="19.13"/><rect x="164.80" y="18.15" width="1.25" height="11.85"/><rect x="166.40" y="17.33" width="1.25" height="12.67"/><rect x="168.00" y="14.70" width="1.25" height="15.30"/><rect x="169.60" y="20.85" width="1.25" height="9.15"/><rect x="171.20" y="21.11" width="1.25" height="8.89"/><rect x="172.80" y="14.32" width="1.25" height="15.68"/><rect x="174.40" y="15.14" width="1.25" height="14.86"/><rect x="176.00" y="20.25" width="1.25" height="9.75"/><rect x="177.60" y="20.79" width="1.25" height="9.21"/><rect x="179.20" y="15.85" width="1.25" height="14.15"/><rect x="180.80" y="14.04" width="1.25" height="15.96"/><rect x="182.40" y="17.73" width="1.25" height="12.27"/><rect x="184.00" y="10.95" width="1.25" height="19.05"/><rect x="185.60" y="11.56" width="1.25" height="18.44"/><rect x="187.20" y="14.07" width="1.25" height="15.93"/><rect x="188.80" y="15.71" width="1.25" height="14.29"/><rect x="190.40" y="18.57" width="1.25" height="11.43"/><rect x="192.00" y="19.15" width="1.25" height="10.85"/><rect x="193.60" y="10.84" width="1.25" height="19.16"/><rect x="195.20" y="17.35" width="1.25" height="12.65"/><rect x="196.80" y="13.16" width="1.25" height="16.84"/><rect x="198.40" y="17.19" width="1.25" height="12.81"/><rect x="200.00" y="12.09" width="1.25" height="17.91"/><rect x="201.60" y="14.13" width="1.25" height="15.87"/><rect x="203.20" y="16.86" width="1.25" height="13.14"/><rect x="204.80" y="17.92" width="1.25" height="12.08"/><rect x="206.40" y="13.02" width="1.25" height="16.98"/><rect x="208.00" y="18.88" width="1.25" height="11.12"/><rect x="209.60" y="17.44" width="1.25" height="12.56"/><rect x="211.20" y="14.47" width="1.25" height="15.53"/><rect x="212.80" y="11.83" width="1.25" height="18.17"/><rect x="214.40" y="13.97" width="1.25" height="16.03"/><rect x="216.00" y="16.98" width="1.25" height="13.02"/><rect x="217.60" y="11.24" width="1.25" height="18.76"/><rect x="219.20" y="17.66" width="1.25" height="12.34"/><rect x="220.80" y="19.35" width="1.25" height="10.65"/><rect x="222.40" y="17.08" width="1.25" height="12.92"/><rect x="224.00" y="15.49" width="1.25" height="14.51"/><rect x="225.60" y="18.96" width="1.25" height="11.04"/><rect x="227.20" y="17.91" width="1.25" height="12.09"/><rect x="228.80" y="16.18" width="1.25" height="13.82"/><rect x="230.40" y="14.35" width="1.25" height="15.65"/><rect x="232.00" y="18.32" width="1.25" height="11.68"/><rect x="233.60" y="16.24" width="1.25" height="13.76"/><rect x="235.20" y="11.48" width="1.25" height="18.52"/><rect x="236.80" y="10.68" width="1.25" height="19.32"/><rect x="238.40" y="13.59" width="1.25" height="16.41"/><rect x="240.00" y="13.28" width="1.25" height="16.72"/><rect x="241.60" y="14.24" width="1.25" height="15.76"/><rect x="243.20" y="18.24" width="1.25" height="11.76"/><rect x="244.80" y="19.18" width="1.25" height="10.82"/><rect x="246.40" y="19.34" width="1.25" height="10.66"/><rect x="248.00" y="11.31" width="1.25" height="18.69"/><rect x="249.60" y="13.19" width="1.25" height="16.81"/><rect x="251.20" y="10.84" width="1.25" height="19.16"/><rect x="252.80" y="19.31" width="1.25" height="10.69"/><rect x="254.40" y="13.77" width="1.25" height="16.23"/><rect x="256.00" y="15.16" width="1.25" height="14.84"/><rect x="257.60" y="12.93" width="1.25" height="17.07"/><rect x="259.20" y="16.63" width="1.25" height="13.37"/><rect x="260.80" y="10.51" width="1.25" height="19.49"/><rect x="262.40" y="18.82" width="1.25" height="11.18"/><rect x="264.00" y="14.59" width="1.25" height="15.41"/><rect x="265.60" y="12.87" width="1.25" height="17.13"/><rect x="267.20" y="11.40" width="1.25" height="18.60"/><rect x="268.80" y="12.87" width="1.25" height="17.13"/><rect x="270.40" y="13.17" width="1.25" height="16.83"/><rect x="272.00" y="12.36" width="1.25" height="17.64"/><rect x="273.60" y="11.26" width="1.25" height="18.74"/><rect x="275.20" y="16.33" width="1.25" height="13.67"/><rect x="276.80" y="13.33" width="1.25" height="16.67"/><rect x="278.40" y="11.39" width="1.25" height="18.61"/><rect x="280.00" y="11.66" width="1.25" height="18.34"/><rect x="281.60" y="15.75" width="1.25" height="14.25"/><rect x="283.20" y="12.39" width="1.25" height="17.61"/><rect x="284.80" y="11.73" width="1.25" height="18.27"/><rect x="286.40" y="14.34" width="1.25" height="15.66"/><rect x="288.00" y="13.88" width="1.25" height="16.12"/><rect x="289.60" y="16.06" width="1.25" height="13.94"/><rect x="291.20" y="14.26" width="1.25" height="15.74"/><rect x="292.80" y="14.02" width="1.25" height="15.98"/><rect x="294.40" y="18.78" width="1.25" height="11.22"/><rect x="296.00" y="13.75" width="1.25" height="16.25"/><rect x="297.60" y="10.56" width="1.25" height="19.44"/><rect x="299.20" y="11.58" width="1.25" height="18.42"/><rect x="300.80" y="12.95" width="1.25" height="17.05"/><rect x="302.40" y="16.00" width="1.25" height="14.00"/><rect x="304.00" y="12.88" width="1.25" height="17.12"/><rect x="305.60" y="15.83" width="1.25" height="14.17"/><rect x="307.20" y="18.59" width="1.25" height="11.41"/><rect x="308.80" y="16.50" width="1.25" height="13.50"/><rect x="310.40" y="24.79" width="1.25" height="5.21"/><rect x="312.00" y="20.28" width="1.25" height="9.72"/><rect x="313.60" y="28.26" width="1.25" height="1.74"/><rect x="315.20" y="24.61" width="1.25" height="5.39"/><rect x="316.80" y="27.18" width="1.25" height="2.82"/><rect x="318.40" y="29.00" width="1.25" height="1.00"/><rect x="320.00" y="27.21" width="1.25" height="2.79"/></svg>
   <svg class="a" style="left:563px;top:529.1px" width="7" height="7" viewBox="0 0 7 7"><circle cx="3.5" cy="3.5" r="3" fill="none" stroke="#777" stroke-width="0.8"/><path d="M3.5 1.8 V3.6 H5" fill="none" stroke="#777" stroke-width="0.7"/></svg>
   <div class="a gray" style="left:572px;top:527.1px;color:#777;font-size:8.5px">02:44</div>
   <div class="btn" style="left:608.3px;top:522.9px;width:40px"></div>
   <svg class="a" style="left:613px;top:526.9px" width="8" height="8" viewBox="0 0 8 8"><path d="M4 0.5 V5 M2 3 L4 5.2 L6 3" fill="none" stroke="#2f7fd8" stroke-width="1.3"/><path d="M0.5 6 V7.5 H7.5 V6" fill="none" stroke="#2f7fd8" stroke-width="1.1"/></svg>
   <div class="a" style="left:624px;top:525.9px;font-size:8.5px;color:#2f7fd8;line-height:11px">下载</div>
   <div class="btn" style="left:656.4px;top:522.9px;width:39.5px"></div>
   <svg class="a" style="left:660.5px;top:526.4px" width="9" height="9" viewBox="0 0 9 9"><path d="M4.5 0.6 L5.6 3.2 L8.4 3.4 L6.3 5.2 L6.9 8 L4.5 6.5 L2.1 8 L2.7 5.2 L0.6 3.4 L3.4 3.2 Z" fill="none" stroke="#2f7fd8" stroke-width="0.8"/></svg>
   <div class="a" style="left:673px;top:525.9px;font-size:8.5px;color:#2f7fd8;line-height:11px">收藏</div>
   <div class="tag" style="left:203px;top:544.8px;width:59.0px">乔什伍德沃德</div>
   <div class="tag" style="left:268.8px;top:544.8px;width:40.4px">cc_by_3</div>
   <div class="tag" style="left:316.8px;top:544.8px;width:43.5px">流行音乐</div>
   <div class="tag" style="left:367.1px;top:544.8px;width:27.4px">民歌</div>
   <div class="tag" style="left:401.4px;top:544.8px;width:42.8px">创作歌手</div>
   <div class="tag" style="left:452px;top:544.8px;width:44.0px">活力.自由</div>
   <div class="tag" style="left:503.5px;top:544.8px;width:26.7px">轻快</div>
   <div class="a gray" style="left:643px;top:550px">作者：<span style="font-size:8.5px;letter-spacing:0">Josh Wood...</span></div>
   <div class="a gray" style="left:723.5px;top:550px"><span style="font-size:8.8px">CC</span>协议<span style="font-size:8.8px">(</span>可商用,署名<span style="font-size:8.8px">)</span></div>
  </div>
 </div>
</div>
</body></html>
